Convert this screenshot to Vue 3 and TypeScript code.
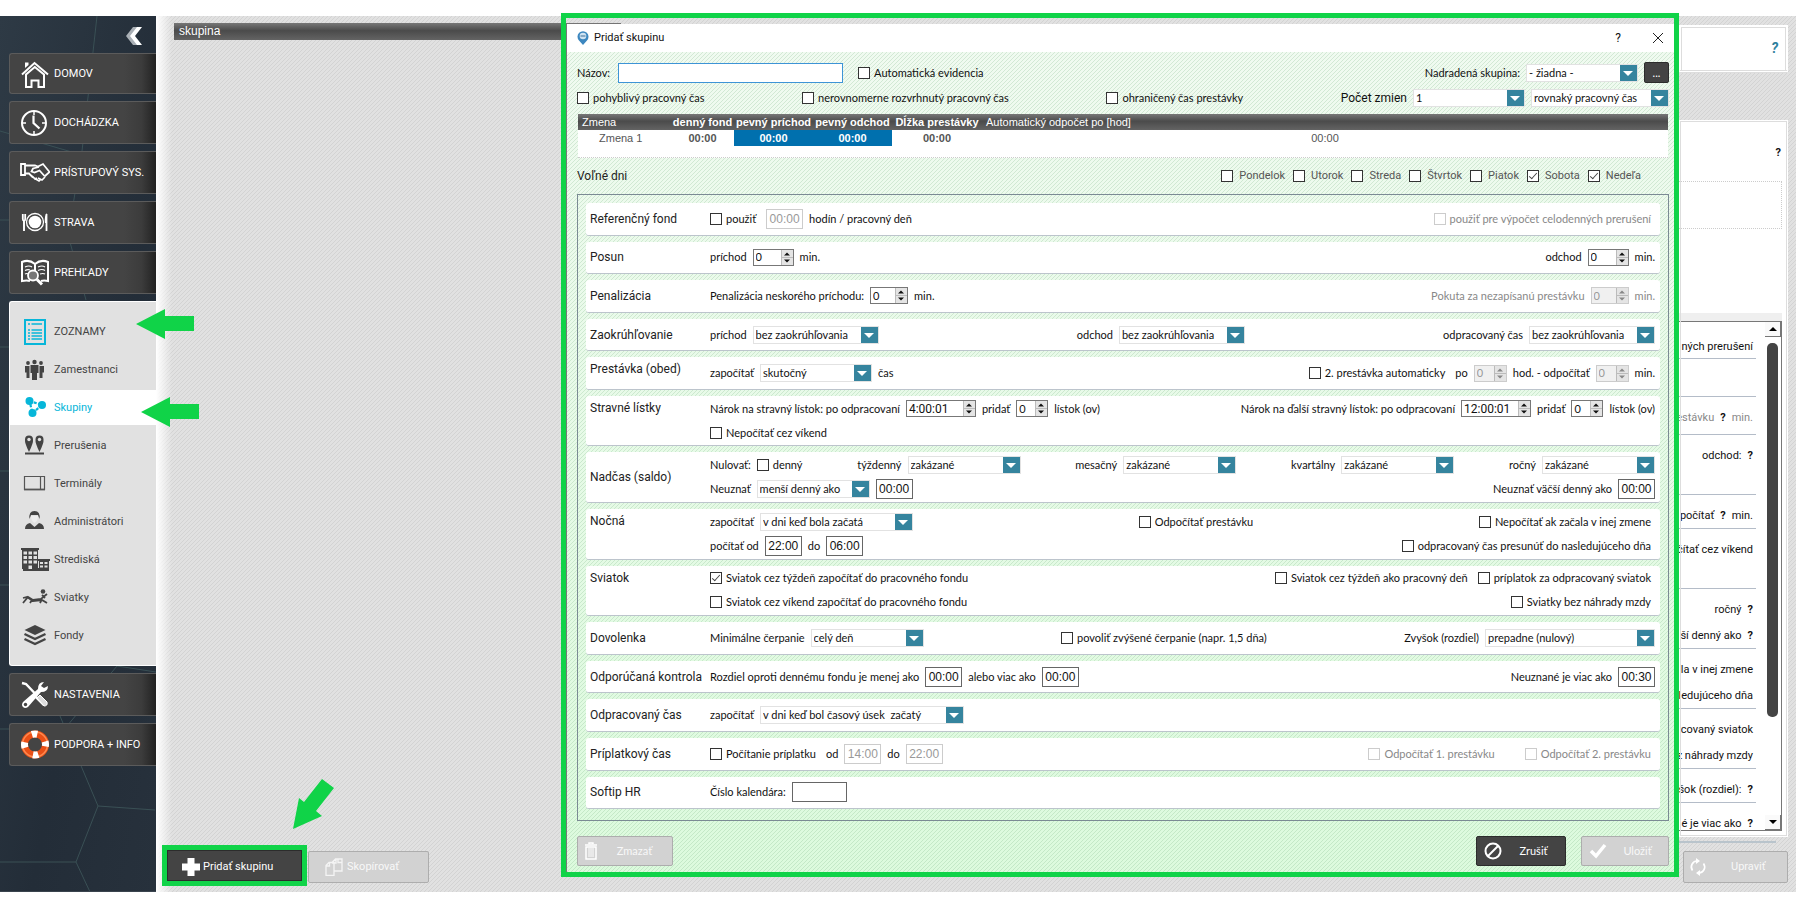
<script setup lang="ts">
interface Item {
  kind: 'text' | 'check' | 'time' | 'select' | 'spin'
  label?: string
  after?: string
  value?: string
  width?: number
  checked?: boolean
  disabled?: boolean
}
interface Section {
  title: string
  middle?: boolean
  lines: Item[][][]
}

const check = (label: string, checked = false, disabled = false): Item => ({ kind: 'check', label, checked, disabled })
const time = (label: string, value: string, disabled = false, after = ''): Item => ({ kind: 'time', label, value, disabled, after, width: 37 })
const select = (label: string, value: string, width: number, after = ''): Item => ({ kind: 'select', label, value, width, after })
const spin = (label: string, value: string, width: number, after = '', disabled = false): Item => ({ kind: 'spin', label, value, width, after, disabled })

const sections: Section[] = [
  {
    title: 'Referenčný fond',
    middle: true,
    lines: [[
      [check('použiť'), time('', '00:00', true, 'hodín / pracovný deň')],
      [check('použiť pre výpočet celodenných prerušení', false, true)],
    ]],
  },
  {
    title: 'Posun',
    middle: true,
    lines: [[[spin('príchod', '0', 41, 'min.')], [spin('odchod', '0', 41, 'min.')]]],
  },
  {
    title: 'Penalizácia',
    middle: true,
    lines: [[
      [spin('Penalizácia neskorého príchodu:', '0', 38, 'min.')],
      [spin('Pokuta za nezapísanú prestávku', '0', 38, 'min.', true)],
    ]],
  },
  {
    title: 'Zaokrúhľovanie',
    middle: true,
    lines: [[
      [select('príchod', 'bez zaokrúhľovania', 126)],
      [select('odchod', 'bez zaokrúhľovania', 126)],
      [select('odpracovaný čas', 'bez zaokrúhľovania', 126)],
    ]],
  },
  {
    title: 'Prestávka (obed)',
    lines: [[
      [select('započítať', 'skutočný', 112, 'čas')],
      [check('2. prestávka automaticky'), spin('po', '0', 33, 'hod. - odpočítať', true), spin('', '0', 33, 'min.', true)],
    ]],
  },
  {
    title: 'Stravné lístky',
    lines: [
      [
        [spin('Nárok na stravný lístok: po odpracovaní', '4:00:01', 70), spin('pridať', '0', 32, 'lístok (ov)')],
        [spin('Nárok na ďalší stravný lístok: po odpracovaní', '12:00:01', 70), spin('pridať', '0', 32, 'lístok (ov)')],
      ],
      [[check('Nepočítať cez víkend')]],
    ],
  },
  {
    title: 'Nadčas (saldo)',
    middle: true,
    lines: [
      [
        [{ kind: 'text', label: 'Nulovať:' }, check('denný')],
        [select('týždenný', 'zakázané', 113)],
        [select('mesačný', 'zakázané', 113)],
        [select('kvartálny', 'zakázané', 113)],
        [select('ročný', 'zakázané', 113)],
      ],
      [
        [select('Neuznať', 'menší denný ako', 113), time('', '00:00')],
        [time('Neuznať väčší denný ako', '00:00')],
      ],
    ],
  },
  {
    title: 'Nočná',
    lines: [
      [
        [select('započítať', 'v dni keď bola začatá', 153)],
        [check('Odpočítať prestávku')],
        [check('Nepočítať ak začala v inej zmene')],
      ],
      [
        [time('počítať od', '22:00'), time('do', '06:00')],
        [check('odpracovaný čas presunúť do nasledujúceho dňa')],
      ],
    ],
  },
  {
    title: 'Sviatok',
    lines: [
      [
        [check('Sviatok cez týždeň započítať do pracovného fondu', true)],
        [check('Sviatok cez týždeň ako pracovný deň'), check('príplatok za odpracovaný sviatok')],
      ],
      [
        [check('Sviatok cez víkend započítať do pracovného fondu')],
        [check('Sviatky bez náhrady mzdy')],
      ],
    ],
  },
  {
    title: 'Dovolenka',
    middle: true,
    lines: [[
      [select('Minimálne čerpanie', 'celý deň', 113)],
      [check('povoliť zvýšené čerpanie (napr. 1,5 dňa)')],
      [select('Zvyšok (rozdiel)', 'prepadne (nulový)', 170)],
    ]],
  },
  {
    title: 'Odporúčaná kontrola',
    middle: true,
    lines: [[
      [time('Rozdiel oproti dennému fondu je menej ako', '00:00'), time('alebo viac ako', '00:00')],
      [time('Neuznané je viac ako', '00:30')],
    ]],
  },
  {
    title: 'Odpracovaný čas',
    middle: true,
    lines: [[[select('započítať', 'v dni keď bol časový úsek\u00a0 začatý', 204)]]],
  },
  {
    title: 'Príplatkový čas',
    middle: true,
    lines: [[
      [check('Počítanie príplatku'), time('od', '14:00', true), time('do', '22:00', true)],
      [check('Odpočítať 1. prestávku', false, true), check('Odpočítať 2. prestávku', false, true)],
    ]],
  },
  {
    title: 'Softip HR',
    middle: true,
    lines: [[[{ kind: 'time', label: 'Číslo kalendára:', value: '', width: 55 }]]],
  },
]

const menuTop = [
  { icon: 'home', text: 'DOMOV' },
  { icon: 'clock', text: 'DOCHÁDZKA' },
  { icon: 'hands', text: 'PRÍSTUPOVÝ SYS.' },
  { icon: 'plate', text: 'STRAVA' },
  { icon: 'book', text: 'PREHĽADY' },
]
const submenu = [
  { icon: 'list', text: 'ZOZNAMY' },
  { icon: 'people', text: 'Zamestnanci' },
  { icon: 'groups', text: 'Skupiny', active: true },
  { icon: 'pins', text: 'Prerušenia' },
  { icon: 'terminal', text: 'Terminály' },
  { icon: 'admin', text: 'Administrátori' },
  { icon: 'building', text: 'Strediská' },
  { icon: 'beach', text: 'Sviatky' },
  { icon: 'layers', text: 'Fondy' },
]
const menuBottom = [
  { icon: 'tools', text: 'NASTAVENIA' },
  { icon: 'ring', text: 'PODPORA + INFO' },
]

const days = ['Pondelok', 'Utorok', 'Streda', 'Štvrtok', 'Piatok', 'Sobota', 'Nedeľa']

const detail: { height: number; lines: { text: string; mark?: boolean; after?: string; dim?: boolean }[] }[] = [
  { height: 24, lines: [{ text: 'ných prerušení' }] },
  { height: 38, lines: [] },
  { height: 38, lines: [{ text: 'estávku', mark: true, after: 'min.', dim: true }] },
  { height: 60, lines: [{ text: 'odchod:', mark: true }] },
  { height: 34, lines: [{ text: 'počítať', mark: true, after: 'min.' }] },
  { height: 60, lines: [{ text: 'čítať cez víkend' }] },
  { height: 60, lines: [{ text: 'ročný', mark: true }, { text: 'ší denný ako', mark: true }] },
  { height: 60, lines: [{ text: 'la v inej zmene' }, { text: 'ledujúceho dňa' }] },
  { height: 60, lines: [{ text: 'covaný sviatok' }, { text: 'z náhrady mzdy' }] },
  { height: 34, lines: [{ text: 'šok (rozdiel):', mark: true }] },
  { height: 34, lines: [{ text: 'é je viac ako', mark: true }] },
]
</script>

<template>
  <div class="page">
    <svg class="defs" aria-hidden="true">
      <symbol id="i-home" viewBox="0 0 30 30">
        <path d="M2 15.5 14.500 4 28 15.500M6 15.500V28h5.500v-6.500h7V28H24V15.500L14.800 8z" fill="none" stroke="#fff" stroke-width="2" />
        <path d="M5 9V3.500h3.500V6z" fill="#fff" />
      </symbol>
      <symbol id="i-clock" viewBox="0 0 30 30">
        <circle cx="14" cy="15" r="12" fill="none" stroke="#fff" stroke-width="2" />
        <path d="M14 3v4M14 23v4M2 15h4M22 15h4" stroke="#fff" stroke-width="1.500" />
        <path d="M13.500 7.500V15l6 5.500" fill="none" stroke="#fff" stroke-width="2.200" />
      </symbol>
      <symbol id="i-hands" viewBox="0 0 30 30">
        <path d="M1 6h4v11H1zM5 7.500h10l4 1.500M5 15.500h4l4 4M19 9l-6 1.500-1.500 3 3 1 5-2 5 5.500" fill="none" stroke="#fff" stroke-width="1.800" />
        <path d="m18 8.500 5-2.500 6.500 8-5 4.500M12 18l3 3 2-1M14 20l5 3 2-2M18 20l4 2 3-3" fill="none" stroke="#fff" stroke-width="1.700" />
      </symbol>
      <symbol id="i-plate" viewBox="0 0 30 30">
        <circle cx="15" cy="14" r="8.500" fill="none" stroke="#fff" stroke-width="1.300" />
        <circle cx="15" cy="14" r="6.300" fill="#fff" />
        <path d="M2.500 6v5q0 2 1.500 2t1.500-2V6M4 6v17" fill="none" stroke="#fff" stroke-width="1.200" />
        <path d="M4 12v11M26.500 6v17" stroke="#fff" stroke-width="1.800" />
        <path d="M27 5q-3 3-2 10h2z" fill="#fff" />
      </symbol>
      <symbol id="i-book" viewBox="0 0 30 30">
        <path d="M15 6Q9 1 2 4v19q5-1 8 0M15 6q6-5 13-2v19q-4-1-7 0M15 6v7" fill="none" stroke="#fff" stroke-width="2" />
        <path d="M5 9q4-2 7 0M5 12.500q3-1.500 5-.5M5 16q2-1 3 0M18 9q4-2 7 0M18 12.500q4-2 7 0M20 16q3-1 5 0" fill="none" stroke="#fff" stroke-width="1.200" />
        <circle cx="13" cy="17.500" r="5" fill="#777" stroke="#fff" stroke-width="1.800" />
        <path d="m17 21.500 5 5" stroke="#fff" stroke-width="3" />
      </symbol>
      <symbol id="i-list" viewBox="0 0 30 30">
        <path d="M5 3h20v24H5z" fill="none" stroke="#07b6d9" stroke-width="2" />
        <path d="M11.500 7H22M11.500 13H22M11.500 16H22M11.500 19H22M11.500 22H22M8 7h2M8 13h2M8 16h2M8 19h2M8 22h2" stroke="#07b6d9" stroke-width="1.500" />
      </symbol>
      <symbol id="i-people" viewBox="0 0 30 30">
        <g fill="#444"><circle cx="8" cy="8" r="1.900" /><circle cx="14.500" cy="7" r="2.200" /><circle cx="21" cy="8" r="1.900" /><path d="M5 11h4.500v12H6.500V17.500H5zM10.500 10h8v8h-1.500v7h-5v-7h-1.500zM19.500 11h4.500v6.500h-1.500V23h-3z" /></g>
      </symbol>
      <symbol id="i-groups" viewBox="0 0 30 30">
        <g fill="#07b6d9"><circle cx="9.500" cy="8" r="4" /><circle cx="22" cy="12" r="4" /><circle cx="12.500" cy="20" r="4" /></g>
        <path d="m9.500 8 12.500 4-9.500 8z" fill="none" stroke="#07b6d9" stroke-width="2.200" stroke-dasharray="3 1.500" />
      </symbol>
      <symbol id="i-pins" viewBox="0 0 30 30">
        <path d="M9 21Q4.500 12 5 8.500a4 4 0 0 1 8 0Q13.500 12 9 21zM19.500 21q-4.500-9-4-12.500a4 4 0 0 1 8 0Q24 12 19.500 21z" fill="#444" />
        <circle cx="9" cy="8.500" r="1.700" fill="#e1e1e1" /><circle cx="19.500" cy="8.500" r="1.700" fill="#e1e1e1" />
        <path d="M5 22.500h19" stroke="#444" stroke-width="2" />
      </symbol>
      <symbol id="i-terminal" viewBox="0 0 30 30">
        <path d="M4.500 7.500h20v13h-20zM20.500 7v14" fill="none" stroke="#555" stroke-width="1.200" />
        <path d="M4 20.500h21" stroke="#555" stroke-width="1.800" />
      </symbol>
      <symbol id="i-admin" viewBox="0 0 30 30">
        <path d="M11 9q0 5 3.500 7 3.500-2 3.500-7" fill="#eee" />
        <path d="M9.500 12q-1-8 5-8t5 8l-1.500-4h-7zM5 22q0-5 5-6l4.500 4 4.500-4q5 1 5 6z" fill="#444" />
      </symbol>
      <symbol id="i-building" viewBox="0 0 30 30">
        <path d="M1 3h18v2H1zM2 5h16v19H2z" fill="#444" /><path d="M18 14h12v2H18zM19 16h10v10H3v-3h16z" fill="#444" />
        <path d="M3.500 6.500H7v3H3.500zM8.500 6.500H12v3H8.500zM13.500 6.500h3.500v3h-3.500zM3.500 11H7v3H3.500zM8.500 11H12v3H8.500zM13.500 11h3.500v3h-3.500zM3.500 15.500H7v3H3.500zM8.500 15.500H12v3H8.500zM13.500 15.500h3.500v3h-3.500zM8.500 20.500H12V24H8.500zM20 17h3v2h-3zM24.500 17h3v2h-3zM20 20.500h3v2h-3zM24.500 20.500h3v2h-3z" fill="#e1e1e1" />
      </symbol>
      <symbol id="i-beach" viewBox="0 0 30 30">
        <path d="m3 20 5-6 5 3 8-1 6-5M3 15l4-1 6 4 9-1 5 3M22 16l-2 4M22 12l3 3M10 20l2-3" fill="none" stroke="#444" stroke-width="1.800" />
        <circle cx="23" cy="8.500" r="2.300" fill="#444" />
      </symbol>
      <symbol id="i-layers" viewBox="0 0 30 30">
        <path d="m15 4 10.500 5L15 14 4.500 9z" fill="#444" />
        <path d="M4.500 13 15 18l10.500-5M4.500 18 15 23l10.500-5" fill="none" stroke="#444" stroke-width="2.400" />
      </symbol>
      <symbol id="i-tools" viewBox="0 0 30 30">
        <path d="m2 3 4 1 9 9.500M16 17l8 8" stroke="#fff" stroke-width="2.500" fill="none" />
        <path d="m17 18 3-3 7 7q1 4-3 4z" fill="#ddd" stroke="#fff" />
        <path d="M24 2q-6 0-6 7L3 22q-2 3 0 5t5 0l13-15q7 0 7-6l-4 2-3-2z" fill="#fff" />
        <circle cx="5.500" cy="24.500" r="1.700" fill="#444" />
      </symbol>
      <symbol id="i-ring" viewBox="0 0 30 30">
        <circle cx="15" cy="14.500" r="10.500" fill="none" stroke="#ea4f16" stroke-width="7" />
        <circle cx="15" cy="14.500" r="12.500" fill="none" stroke="#ff8a50" stroke-width="1.500" />
        <circle cx="15" cy="14.500" r="10.500" fill="none" stroke="#fff" stroke-width="7" stroke-dasharray="5.500 11" stroke-dashoffset="-13" />
      </symbol>
    </svg>

    <div class="app">
      <nav class="sidebar">
        <svg class="hex" viewBox="0 0 156 876" preserveAspectRatio="xMinYMin slice" aria-hidden="true">
          <path d="M97 0 82 135 68 219l18 65M0 115l82 24M0 204h9M0 331h9M0 455h9M0 569h9M0 713h9M156 656l-39-6-50 60M117 650l-3-8M60 700l38 90 57 4M98 790l-22 56 14 30M0 846h76" />
        </svg>
        <button class="collapse" aria-label="Zbaliť">
          <svg viewBox="0 0 17 18"><path d="M7 0h5L6 9l6 9H7L0 9z" fill="#a9afb5" /><path d="M11 0h5l-7 9 7 9h-5L4 9z" fill="#fff" /></svg>
        </button>
        <button v-for="m in menuTop" :key="m.text" class="menu"><svg><use :href="'#i-' + m.icon" /></svg>{{ m.text }}</button>
        <div class="panel">
          <button v-for="m in submenu" :key="m.text" class="sub" :class="{ active: m.active }"><svg><use :href="'#i-' + m.icon" /></svg>{{ m.text }}</button>
        </div>
        <button v-for="m in menuBottom" :key="m.text" class="menu"><svg><use :href="'#i-' + m.icon" /></svg>{{ m.text }}</button>
      </nav>

      <main class="content">
        <section class="groups">
          <div class="list-head">skupina</div>
          <div class="group-actions">
            <div class="spot">
              <button class="btn add"><svg viewBox="0 0 18 18"><path d="M5.500 0h7v5.500H18v7h-5.500V18h-7v-5.500H0v-7h5.500z" fill="#fff" /></svg>Pridať skupinu</button>
            </div>
            <button class="btn off copy" disabled>
              <svg viewBox="0 0 18 18"><path d="M1 7.500 4 4.500h5v13H1zM7 4.500l3.500-3.500H17v12H9M1 8h3.500V4.500M7 5h4V1M13 1v3.500h4" fill="none" stroke="#f4f4f4" stroke-width="1.300" /></svg>Skopírovať
            </button>
          </div>
        </section>

        <section class="side">
          <div class="help-card"><span>?</span></div>
          <div class="info-card">
            <div class="info-top"><b>?</b></div>
            <div class="dotted"></div>
            <div class="scroller">
              <div class="rows">
                <div v-for="(d, i) in detail" :key="i" class="drow" :style="{ height: d.height + 'px' }">
                  <p v-for="l in d.lines" :key="l.text" :class="{ dim: l.dim }">{{ l.text }} <b v-if="l.mark">?</b><span v-if="l.after">{{ l.after }}</span></p>
                </div>
              </div>
              <div class="bar">
                <button aria-label="Hore"><svg viewBox="0 0 8 4"><path d="M4 0 8 4H0z" /></svg></button>
                <i></i>
                <button aria-label="Dole"><svg viewBox="0 0 8 4"><path d="M0 0h8L4 4z" /></svg></button>
              </div>
            </div>
          </div>
          <div class="edge"></div>
          <button class="btn off edit" disabled>
            <svg viewBox="0 0 18 18"><path d="M8 3a6 6 0 0 0-4.500 9.500M10 15a6 6 0 0 0 4.500-9.500" fill="none" stroke="#fff" stroke-width="1.700" /><path d="M7 0v6l4-3zM11 12v6l-4-3z" fill="#fff" /></svg>Upraviť
          </button>
        </section>
      </main>
    </div>

    <div class="overlay">
      <form class="dialog" role="dialog" aria-label="Pridať skupinu" @submit.prevent>
        <header class="title">
          <svg viewBox="0 0 12 14"><path d="M6 14 2 9.500a5.500 5.500 0 1 1 8 0z" fill="#3c87bf" /><circle cx="6" cy="5" r="3.300" fill="#cfe3f2" /><path d="M3.500 5h5" stroke="#3c6f95" /></svg>
          <h1>Pridať skupinu</h1>
          <button type="button" aria-label="Pomocník">?</button>
          <button type="button" aria-label="Zavrieť"><svg viewBox="0 0 10 10"><path d="m0 0 10 10M10 0 0 10" stroke="#222" /></svg></button>
        </header>

        <div class="body">
          <div class="top-row first">
            <label class="field name"><span>Názov:</span><input class="name-input" type="text" /></label>
            <label class="chk"><input type="checkbox" /><span>Automatická evidencia</span></label>
            <label class="field parent"><span>Nadradená skupina:</span><span class="sel" :style="{ width: '112px' }"><select><option>- žiadna -</option></select></span></label>
            <button type="button" class="dots">...</button>
          </div>
          <div class="top-row spread">
            <label class="chk"><input type="checkbox" /><span>pohyblivý pracovný čas</span></label>
            <label class="chk"><input type="checkbox" /><span>nerovnomerne rozvrhnutý pracovný čas</span></label>
            <label class="chk"><input type="checkbox" /><span>ohraničený čas prestávky</span></label>
            <div class="item-group">
              <label class="field big"><span>Počet zmien</span><span class="sel" :style="{ width: '112px' }"><select><option>1</option></select></span></label>
              <span class="sel" :style="{ width: '138px' }"><select aria-label="Typ zmien"><option>rovnaký pracovný čas</option></select></span>
            </div>
          </div>

          <div class="table-box">
            <table>
              <colgroup><col class="c1" /><col class="c2" /><col class="c3" /><col class="c3" /><col class="c5" /><col /></colgroup>
              <thead>
                <tr><th class="plain">Zmena</th><th>denný fond</th><th>pevný príchod</th><th>pevný odchod</th><th>Dĺžka prestávky</th><th class="plain">Automatický odpočet po [hod]</th></tr>
              </thead>
              <tbody>
                <tr><td class="shift">Zmena 1</td><td><b>00:00</b></td><td class="on"><b>00:00</b></td><td class="on"><b>00:00</b></td><td><b>00:00</b></td><td class="auto">00:00</td></tr>
              </tbody>
            </table>
          </div>

          <div class="days">
            <span class="days-title">Voľné dni</span>
            <label v-for="(d, i) in days" :key="d" class="chk day"><input type="checkbox" :checked="i > 4" /><span>{{ d }}</span></label>
          </div>

          <div class="box">
            <section v-for="s in sections" :key="s.title" class="card" :class="{ tall: s.lines.length > 1, middle: s.middle }">
              <h2>{{ s.title }}</h2>
              <div class="lines">
                <div v-for="(line, li) in s.lines" :key="li" class="line">
                  <div v-for="(group, gi) in line" :key="gi" class="item-group" :class="{ end: gi > 0 && gi === line.length - 1 }">
                    <template v-for="(it, ii) in group" :key="ii">
                      <span v-if="it.kind === 'text'">{{ it.label }}</span>
                      <label v-else-if="it.kind === 'check'" class="chk" :class="{ dim: it.disabled }">
                        <input type="checkbox" :checked="it.checked" :disabled="it.disabled" /><span>{{ it.label }}</span>
                      </label>
                      <label v-else class="field" :class="{ dim: it.disabled && it.kind === 'spin' && it.width === 38 }">
                        <span v-if="it.label">{{ it.label }}</span>
                        <input v-if="it.kind === 'time'" class="time" type="text" :value="it.value" :disabled="it.disabled" :style="{ width: it.width + 'px' }" />
                        <span v-else-if="it.kind === 'select'" class="sel" :style="{ width: it.width + 'px' }"><select><option>{{ it.value }}</option></select></span>
                        <span v-else class="spin" :class="{ off: it.disabled, wide: it.width === 70 }" :style="{ width: it.width + 'px' }">
                          <input type="text" :value="it.value" :disabled="it.disabled" />
                          <svg viewBox="0 0 12 15" aria-hidden="true"><path d="M0 0h12v15H0z" fill="#e4e4e4" /><path d="M0 7.500h12M.5 0v15" stroke="#bbb" /><path d="M6 2.500 9 5.500H3zM3 9.500h6l-3 3z" fill="currentColor" /></svg>
                        </span>
                        <span v-if="it.after">{{ it.after }}</span>
                      </label>
                    </template>
                  </div>
                </div>
              </div>
            </section>
          </div>

          <footer class="foot">
            <button type="button" class="btn off del" disabled><svg viewBox="0 0 12 18"><path d="M1 5h10v12H1zM0 3h12M4 2V1h4v1" fill="none" stroke="#fff" stroke-width="1.500" /><path d="M4 6v9M6 6v9M8 6v9" stroke="#fff" /></svg><span>Zmazať</span></button>
            <span class="grow"></span>
            <button type="button" class="btn cancel"><svg viewBox="0 0 18 18"><circle cx="9" cy="9" r="7.500" fill="none" stroke="#fff" stroke-width="2" /><path d="M14 4 4 14" stroke="#fff" stroke-width="2" /></svg><span>Zrušiť</span></button>
            <button type="button" class="btn off save" disabled><svg viewBox="0 0 18 18"><path d="m2 9 5 5 9-11" fill="none" stroke="#fff" stroke-width="3.500" /></svg><span>Uložiť</span></button>
          </footer>
        </div>
      </form>
    </div>

    <svg class="arrow a1" viewBox="0 0 58 30" aria-hidden="true"><path d="M0 15 29 0v7h29v15H29v8z" /></svg>
    <svg class="arrow a2" viewBox="0 0 58 30" aria-hidden="true"><path d="M0 15 29 0v7h29v15H29v8z" /></svg>
    <svg class="arrow a3" viewBox="0 0 41 50" aria-hidden="true"><path d="M0 50 6 19l5 4L29 0l12 9-18 23 6 5z" /></svg>
  </div>
</template>

<style>
body {
  margin: 0;
  background: #fff;
}
</style>

<style scoped>
.page {
  --ui: Roboto, "Open Sans", sans-serif;
  --small: Lato, Roboto, sans-serif;
  --green: #10d348;
  position: relative;
  box-sizing: border-box;
  height: 100vh;
  padding: 16px 0 17px;
  overflow: hidden;
  font: 11px/16px var(--ui);
  color: #111;
}
.page *,
.page *::before,
.page *::after {
  box-sizing: border-box;
}
.page button,
.page input,
.page select {
  font: inherit;
  color: inherit;
}
.page button {
  cursor: pointer;
}
.defs {
  position: absolute;
  width: 0;
  height: 0;
}
.app {
  display: flex;
  height: 100%;
}

.sidebar {
  position: relative;
  flex: none;
  display: flex;
  flex-direction: column;
  gap: 7px;
  width: 156px;
  padding: 7px 0 0 9px;
  background: linear-gradient(100deg, #2e3a45, #232d38 60%, #27313c);
  border-bottom: 1px solid #3a444e;
  overflow: hidden;
}
.hex {
  position: absolute;
  inset: 0;
  width: 156px;
  height: 100%;
  fill: none;
  stroke: #3a5055;
}
.collapse {
  align-self: flex-end;
  height: 23px;
  padding: 3px 0 0;
  margin-right: 13px;
  border: 0;
  background: none;
  position: relative;
}
.collapse svg {
  display: block;
  width: 17px;
  height: 18px;
}
.menu {
  position: relative;
  display: flex;
  align-items: center;
  gap: 4px;
  height: 43px;
  padding: 0 0 0 10px;
  border: 1px solid #5b5b5b;
  border-right: 0;
  border-radius: 3px 0 0 3px;
  background: linear-gradient(90deg, #444 0 78%, #3c3c3c 90%, #222);
}
.collapse + .menu {
  height: 41px;
}
.page .menu {
  color: #fff;
}
.menu svg,
.sub svg {
  flex: none;
  width: 30px;
  height: 30px;
}
.panel {
  position: relative;
  display: flex;
  flex-direction: column;
  gap: 3px;
  padding: 12px 0;
  border: 1px solid #fff;
  border-right: 0;
  border-radius: 3px 0 0 3px;
  background: #e1e1e1;
}
.sub {
  display: flex;
  align-items: center;
  gap: 4px;
  height: 35px;
  padding: 0 0 0 10px;
  border: 0;
  background: none;
}
.page .sub {
  color: #444;
}
.page .sub.active {
  background: #fff;
  color: #07b6d9;
}

.content {
  flex: 1;
  display: flex;
  justify-content: space-between;
  background:
    linear-gradient(90deg, #fff, rgba(255, 255, 255, 0) 16px) no-repeat,
    linear-gradient(135deg, transparent 40%, #d3d3d3 40% 60%, transparent 60%) 0 0 / 4px 4px,
    #e1e1e1;
}
.groups {
  display: flex;
  flex-direction: column;
  justify-content: space-between;
  width: 465px;
  padding: 7px 0 6px 6px;
}
.list-head {
  height: 17px;
  margin-left: 12px;
  padding-left: 5px;
  font: 12px/16px "Liberation Sans", Arial, sans-serif;
  color: #fff;
  background: linear-gradient(#777, #4b4b4b 45%, #636363);
}
.group-actions {
  display: flex;
  align-items: flex-start;
  gap: 1px;
}
.spot {
  border: 5px solid var(--green);
}
.btn {
  display: flex;
  align-items: center;
  border: 1px solid #2c2c2c;
  border-radius: 2px;
  background: #444;
}
.page .btn {
  color: #fff;
}
.page .btn.off {
  border: 1px solid #adadad;
  background: #d2d2d2;
  color: #f8f8f8;
}
.btn svg {
  width: 18px;
  height: 18px;
}
.add {
  gap: 3px;
  width: 135px;
  height: 31px;
  padding: 3px 0 0 14px;
  border-radius: 0;
}
.copy {
  gap: 4px;
  width: 121px;
  height: 32px;
  margin-top: 6px;
  padding: 0 0 0 16px;
}

.side {
  display: flex;
  flex-direction: column;
  width: 117px;
  padding: 9px 8px 9px 0;
}
.help-card {
  height: 48px;
  padding: 14px 9px 0 0;
  border: 1px solid #fff;
  border-bottom: 3px double #ddd;
  outline: 1px solid #ddd;
  outline-offset: -3px;
  background: #fff;
  text-align: right;
  font: italic bold 14px/16px var(--ui);
  color: #2e7f9d;
}
.info-card {
  display: flex;
  flex: 1;
  flex-direction: column;
  min-height: 0;
  margin-top: 47px;
  padding: 0 6px 6px 0;
  background: #fff;
  outline: 1px solid #ddd;
  outline-offset: -2px;
}
.info-top {
  height: 61px;
  padding: 25px 1px 0 0;
  text-align: right;
}
.dotted {
  height: 48px;
  border: 1px dotted #ccc;
  border-left: 0;
}
.scroller {
  display: flex;
  flex: 1;
  min-height: 0;
  margin-top: 84px;
  border-top: 8px solid #efefef;
}
.rows {
  flex: 1;
  padding: 13px 9px 0 0;
  border-top: 1px solid #777;
  border-bottom: 1px solid #777;
  overflow: hidden;
}
.drow {
  display: flex;
  flex-direction: column;
  gap: 10px;
  padding: 4px 3px 0 0;
  border-bottom: 1px solid #b4bcc8;
}
.drow:not(:first-child) {
  padding-top: 13px;
}
.drow p {
  display: flex;
  flex: none;
  justify-content: flex-end;
  gap: 6px;
  margin: 0;
  white-space: nowrap;
}
.dim {
  color: #888;
}
.drow b {
  color: #111;
}
.bar {
  display: flex;
  flex-direction: column;
  width: 17px;
  border: 1px solid #777;
  border-left: 0;
}
.bar button {
  display: grid;
  place-items: center;
  height: 15px;
  padding: 0;
  border: 1px solid #777;
  border-width: 0 1px 1px 0;
  background: #fafafa;
}
.bar svg {
  width: 8px;
  height: 4px;
}
.bar i {
  flex: 1;
  width: 11px;
  margin: 6px 3px 98px 2px;
  border-radius: 5px;
  background: #444;
}
.edge {
  height: 6px;
  margin: 0 12px 8px 0;
  border-bottom: 2px solid #b9c4cc;
}
.edit {
  gap: 24px;
  height: 32px;
  margin-left: 4px;
  padding: 0 0 0 5px;
}

.overlay {
  position: absolute;
  inset: 13px 117px 32px 561px;
  padding-top: 6px;
  border: 5px solid var(--green);
}
.dialog {
  display: flex;
  flex-direction: column;
  height: 100%;
  border-left: 1px solid #777;
  font: 11px/16px var(--small);
  white-space: nowrap;
}
.title {
  display: flex;
  align-items: center;
  height: 28px;
  padding: 0 11px 0 10px;
  background: #fff;
}
.title > svg {
  width: 12px;
  height: 14px;
}
.title h1 {
  flex: 1;
  margin: 0 0 0 5px;
  font: 11px/16px var(--ui);
}
.title button {
  padding: 0;
  border: 0;
  background: none;
  font: 12px/16px var(--ui);
}
.title button + button {
  margin-left: 32px;
}
.title button svg {
  display: block;
  width: 10px;
  height: 10px;
}
.body {
  flex: 1;
  display: flex;
  flex-direction: column;
  min-height: 0;
  padding: 10px 5px 6px 10px;
  background:
    linear-gradient(135deg, transparent 40%, rgba(120, 180, 130, 0.25) 40% 60%, transparent 60%) 0 0 / 4px 4px,
    linear-gradient(#f0faf0, #dcfadd);
}
.top-row {
  display: flex;
  align-items: center;
  height: 21px;
}
.first {
  margin-bottom: 4px;
}
.spread {
  justify-content: space-between;
}
.field,
.item-group {
  display: flex;
  align-items: center;
  gap: 6px;
}
.chk {
  display: flex;
  align-items: center;
  gap: 4px;
}
.chk + .field,
.line .chk + .chk {
  margin-left: 4px;
}
.line .chk.dim + .chk.dim {
  margin-left: 24px;
}
.chk input {
  display: grid;
  place-items: center;
  appearance: none;
  width: 12px;
  height: 12px;
  margin: 0;
  border: 1px solid #333;
  background: #fff;
}
.chk input:checked::after {
  content: "";
  width: 8px;
  height: 4px;
  border: solid #444;
  border-width: 0 0 1px 1px;
  transform: rotate(-48deg);
  margin-bottom: 3px;
}
.chk input:disabled {
  border-color: #ccc;
}
.name {
  gap: 8px;
  margin-right: 15px;
}
.name-input {
  width: 225px;
  height: 20px;
  border: 1px solid #3d94d6;
  background: #fff;
}
.top-row .parent {
  margin-left: auto;
}
.dots {
  width: 25px;
  height: 21px;
  margin-left: 6px;
  padding: 0;
  border: 1px solid #2c2c2c;
  border-radius: 2px;
  background: #444;
}
.page .dots {
  color: #fff;
}
.big > span:first-child {
  font: 12px/16px var(--ui);
}
.top-row .big {
  margin-left: 0;
}
.sel {
  position: relative;
  display: block;
  height: 18px;
  border: 1px solid #e2e2e2;
  background: #fff;
}
.sel::before {
  content: "";
  position: absolute;
  inset: 0 0 0 auto;
  width: 17px;
  background: #35849e;
  pointer-events: none;
}
.sel::after {
  content: "";
  position: absolute;
  top: 6px;
  right: 4px;
  border: 5px solid transparent;
  border-top-color: #fff;
  border-bottom: 0;
  pointer-events: none;
}
.sel select {
  display: block;
  appearance: none;
  width: 100%;
  height: 16px;
  padding: 0 17px 0 2px;
  border: 0;
  background: none;
}
.table-box {
  height: 44px;
  margin: 6px 1px 0;
  border-bottom: 1px dotted #ccc;
  background: #fff;
  font: 11px/16px "Liberation Sans", Arial, sans-serif;
  color: #555;
}
table {
  width: 100%;
  table-layout: fixed;
  border-collapse: collapse;
}
.c1 { width: 93px; }
.c2 { width: 63px; }
.c3 { width: 79px; }
.c5 { width: 90px; }
thead tr {
  background: linear-gradient(#777, #4b4b4b 45%, #636363);
}
th,
td {
  height: 16px;
  padding: 0 4px;
}
th {
  padding: 0;
  color: #fff;
}
.plain {
  padding-left: 4px;
  text-align: left;
  font-weight: 400;
}
td {
  text-align: center;
}
td.shift {
  padding-left: 21px;
  text-align: left;
}
td.on {
  background: #0070ae;
  color: #fff;
}
.days {
  display: flex;
  align-items: center;
  gap: 8px;
  height: 36px;
  padding-right: 28px;
  font: 11px/16px var(--ui);
  color: #555;
}
.days-title {
  flex: 1;
  font-size: 12px;
  color: #222;
}
.day {
  gap: 6px;
}
.box {
  flex: 1;
  display: flex;
  flex-direction: column;
  gap: 6px;
  min-height: 0;
  padding: 8px 8px 11px;
  border: 1px solid #7b8a94;
}
.card {
  flex: 1 1 32px;
  display: flex;
  min-height: 32px;
  padding: 0 5px 0 4px;
  border-bottom: 1px solid #bcc4cc;
  border-radius: 3px;
  background: #fff;
}
.card.tall {
  flex-basis: 50px;
}
.card h2 {
  width: 120px;
  margin: 4px 0 0;
  font: 12px/16px var(--ui);
  color: #222;
}
.card.middle h2 {
  align-self: center;
  margin: 0;
}
.lines {
  flex: 1;
  display: flex;
  flex-direction: column;
  justify-content: center;
}
.line {
  display: flex;
  align-items: center;
  justify-content: space-between;
  height: 24px;
}
.end > .chk:last-child {
  margin-right: 4px;
}
.time {
  height: 20px;
  padding: 0;
  border: 1px solid #666;
  background: #fff;
  text-align: center;
}
.page .time {
  font: 12px/16px "Liberation Sans", Arial, sans-serif;
}
.time:disabled {
  border-color: #ccc;
}
.page .time:disabled {
  color: #999;
}
.spin {
  display: flex;
  height: 17px;
  border: 1px solid #777;
  background: #fff;
}
.spin input {
  flex: 1;
  min-width: 0;
  width: 0;
  padding: 0 0 0 2px;
  border: 0;
  background: none;
}
.spin svg {
  flex: none;
  width: 12px;
  height: 15px;
  color: #111;
}
.spin.off {
  border-color: #ccc;
  background: #f0f0f0;
  color: #999;
}
.spin.off svg {
  color: #888;
}
.page .spin.wide input {
  font: 12px/16px var(--ui);
}
.foot {
  display: flex;
  align-items: center;
  height: 30px;
  margin-top: 15px;
}
.grow {
  flex: 1;
}
.foot .btn {
  height: 30px;
  padding: 0 0 0 7px;
}
.foot .btn span {
  flex: 1;
  text-align: center;
}
.del { width: 96px; }
.del svg { width: 12px; }
.cancel { width: 90px; margin-right: 15px; }
.save { width: 88px; }

.arrow {
  position: absolute;
  fill: var(--green);
}
.a1 {
  left: 136px;
  top: 309px;
  width: 58px;
  height: 30px;
}
.a2 {
  left: 141px;
  top: 397px;
  width: 58px;
  height: 30px;
}
.a3 {
  left: 293px;
  top: 779px;
  width: 41px;
  height: 50px;
}
</style>
